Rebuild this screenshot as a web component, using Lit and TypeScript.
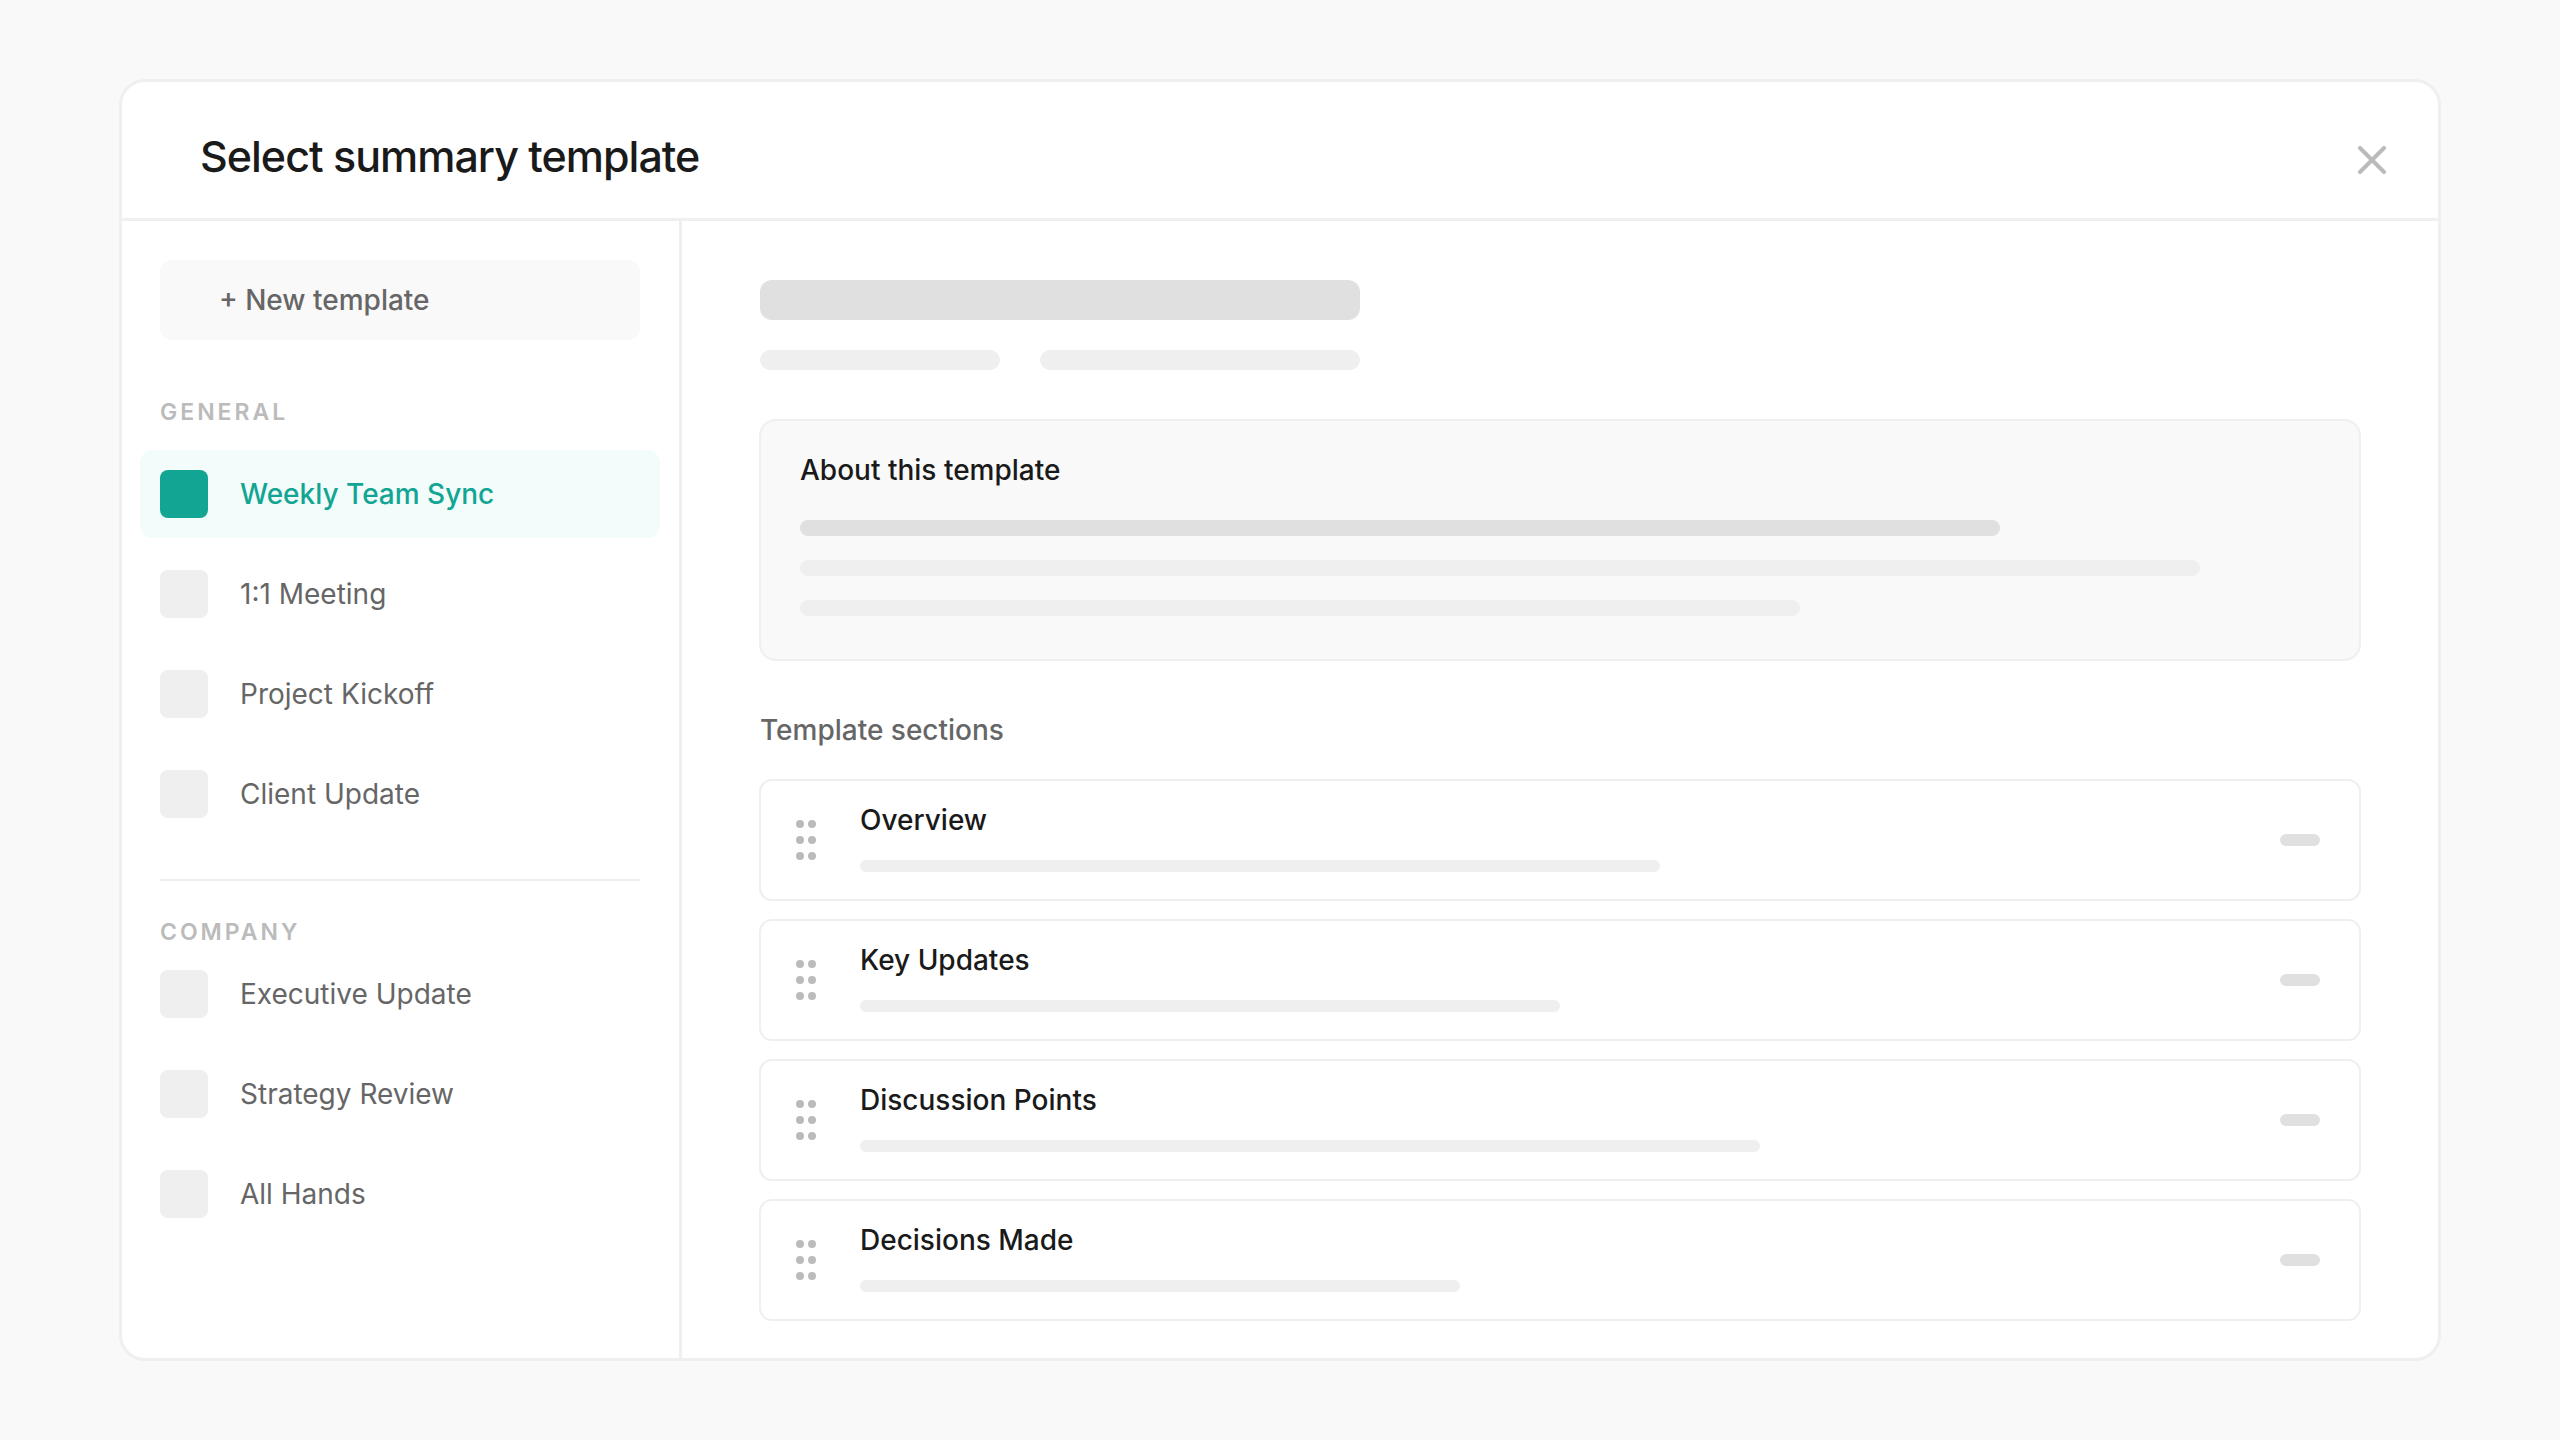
import { LitElement, html, css } from "lit";
import { customElement, property, state } from "lit/decorators.js";
import { classMap } from "lit/directives/class-map.js";
import { styleMap } from "lit/directives/style-map.js";

interface TemplateGroup {
  label: string;
  items: string[];
}

interface TemplateSection {
  title: string;
  width: number;
}

const GROUPS: TemplateGroup[] = [
  {
    label: "GENERAL",
    items: ["Weekly Team Sync", "1:1 Meeting", "Project Kickoff", "Client Update"],
  },
  {
    label: "COMPANY",
    items: ["Executive Update", "Strategy Review", "All Hands"],
  },
];

const SECTIONS: TemplateSection[] = [
  { title: "Overview", width: 800 },
  { title: "Key Updates", width: 700 },
  { title: "Discussion Points", width: 900 },
  { title: "Decisions Made", width: 600 },
];

@customElement("section-card")
class SectionCard extends LitElement {
  @property() heading = "";
  @property({ type: Number }) barWidth = 0;

  static styles = css`
    :host {
      display: flex;
      align-items: center;
      box-sizing: border-box;
      padding: 22px 39px 27px 35px;
      border: 2px solid #efefef;
      border-radius: 13px;
      background: #ffffff;
    }
    .grip {
      flex: none;
      width: 20px;
      height: 40px;
      margin-top: 5px;
      margin-right: 44px;
      fill: #bbbbbb;
    }
    .body {
      flex: 1;
      min-width: 0;
    }
    .title {
      margin: 0 0 23px;
      font-size: 28px;
      line-height: 34px;
      font-weight: 500;
      color: #1a1a1a;
    }
    .bar {
      max-width: 100%;
      height: 12px;
      border-radius: 6px;
      background: #efefef;
    }
    .pill {
      flex: none;
      width: 40px;
      height: 12px;
      margin-top: 5px;
      border-radius: 6px;
      background: #e0e0e0;
    }
  `;

  render() {
    return html`
      <svg class="grip" viewBox="0 0 20 40" aria-hidden="true">
        <circle cx="4" cy="4" r="4" /><circle cx="16" cy="4" r="4" />
        <circle cx="4" cy="20" r="4" /><circle cx="16" cy="20" r="4" />
        <circle cx="4" cy="36" r="4" /><circle cx="16" cy="36" r="4" />
      </svg>
      <div class="body">
        <h3 class="title">${this.heading}</h3>
        <div class="bar" style=${styleMap({ width: `${this.barWidth}px` })}></div>
      </div>
      <div class="pill"></div>
    `;
  }
}

@customElement("app-root")
class AppRoot extends LitElement {
  @state() private selected = "Weekly Team Sync";

  static styles = css`
    :host {
      display: flex;
      box-sizing: border-box;
      min-height: 100vh;
      padding: 79px 119px;
      background: #f9f9f9;
      font-family: Inter, "Liberation Sans", sans-serif;
      color: #1a1a1a;
    }
    .dialog {
      flex: 1;
      display: flex;
      flex-direction: column;
      min-width: 0;
      border: 3px solid #efefef;
      border-radius: 26px;
      background: #ffffff;
      overflow: hidden;
    }
    .header {
      display: flex;
      align-items: flex-end;
      justify-content: space-between;
      padding: 46px 42px 34px 78px;
      border-bottom: 3px solid #efefef;
    }
    .heading {
      margin: 0;
      font-size: 43px;
      line-height: 56px;
      font-weight: 500;
      letter-spacing: -1px;
    }
    button {
      border: 0;
      font: inherit;
      cursor: pointer;
    }
    .close {
      display: flex;
      align-items: center;
      justify-content: center;
      width: 48px;
      height: 48px;
      padding: 0;
      background: none;
    }
    .close svg {
      width: 28px;
      height: 28px;
      stroke: #bbbbbb;
      stroke-width: 4;
      stroke-linecap: round;
    }
    .columns {
      flex: 1;
      display: flex;
    }
    .sidebar {
      flex: none;
      display: flex;
      flex-direction: column;
      box-sizing: border-box;
      width: 560px;
      padding: 39px 19px 39px 18px;
      border-right: 3px solid #efefef;
    }
    .new {
      height: 80px;
      margin: 0 20px 56px;
      padding: 0 59px;
      border-radius: 12px;
      background: #f9f9f9;
      color: #666666;
      font-size: 28px;
      font-weight: 500;
      text-align: left;
    }
    .group-label {
      margin: 0 20px 22px;
      font-size: 23px;
      line-height: 32px;
      font-weight: 600;
      letter-spacing: 3px;
      color: #bbbbbb;
    }
    .group + .group {
      margin-top: 41px;
    }
    .group + .group::before {
      content: "";
      display: block;
      height: 2px;
      margin: 0 20px 35px;
      background: #efefef;
    }
    .group + .group .group-label {
      margin-bottom: 2px;
    }
    .items {
      display: flex;
      flex-direction: column;
      gap: 12px;
      margin: 0;
      padding: 0;
      list-style: none;
    }
    .item {
      display: flex;
      align-items: center;
      gap: 32px;
      width: 100%;
      height: 88px;
      padding: 0 20px;
      border-radius: 13px;
      background: none;
      color: #666666;
      font-size: 28px;
      text-align: left;
    }
    .swatch {
      width: 48px;
      height: 48px;
      border-radius: 8px;
      background: #efefef;
    }
    .item.active {
      background: #f2fcfa;
      color: #12a594;
      font-weight: 500;
    }
    .item.active .swatch {
      background: #12a594;
    }
    .main {
      flex: 1;
      min-width: 0;
      padding: 59px 77px 37px;
    }
    .summary {
      display: flex;
      flex-direction: column;
      gap: 30px;
      padding: 0 1px 49px;
    }
    .title-bar {
      width: 600px;
      max-width: 100%;
      height: 40px;
      border-radius: 12px;
      background: #e0e0e0;
    }
    .meta {
      display: flex;
      gap: 40px;
    }
    .meta-bar {
      height: 20px;
      border-radius: 10px;
      background: #efefef;
    }
    .meta-bar.short {
      width: 240px;
    }
    .meta-bar.long {
      width: 320px;
    }
    .about {
      display: flex;
      flex-direction: column;
      gap: 24px;
      padding: 32px 39px 43px;
      border: 2px solid #efefef;
      border-radius: 17px;
      background: #f9f9f9;
    }
    .about-title {
      margin: 0 0 9px;
      font-size: 28px;
      line-height: 34px;
      font-weight: 500;
    }
    .line {
      max-width: 100%;
      height: 16px;
      border-radius: 8px;
      background: #efefef;
    }
    .line.strong {
      background: #e0e0e0;
    }
    .sections-title {
      margin: 52px 1px 32px;
      font-size: 28px;
      line-height: 34px;
      font-weight: 500;
      color: #666666;
    }
    .sections {
      display: flex;
      flex-direction: column;
      gap: 18px;
    }
  `;

  private renderItem(name: string) {
    const active = name === this.selected;
    return html`
      <li>
        <button
          class=${classMap({ item: true, active })}
          aria-pressed=${active ? "true" : "false"}
          @click=${() => (this.selected = name)}
        >
          <span class="swatch"></span>
          <span>${name}</span>
        </button>
      </li>
    `;
  }

  render() {
    return html`
      <section class="dialog" role="dialog" aria-labelledby="heading">
        <header class="header">
          <h1 class="heading" id="heading">Select summary template</h1>
          <button class="close" aria-label="Close">
            <svg viewBox="0 0 28 28" aria-hidden="true">
              <path d="M2 2 26 26M26 2 2 26" />
            </svg>
          </button>
        </header>
        <div class="columns">
          <nav class="sidebar">
            <button class="new">+ New template</button>
            ${GROUPS.map(
              (group) => html`
                <div class="group">
                  <h2 class="group-label">${group.label}</h2>
                  <ul class="items">
                    ${group.items.map((name) => this.renderItem(name))}
                  </ul>
                </div>
              `,
            )}
          </nav>
          <main class="main">
            <div class="summary">
              <div class="title-bar"></div>
              <div class="meta">
                <div class="meta-bar short"></div>
                <div class="meta-bar long"></div>
              </div>
            </div>
            <div class="about">
              <h2 class="about-title">About this template</h2>
              ${[1200, 1400, 1000].map(
                (width, i) => html`<div
                  class=${classMap({ line: true, strong: i === 0 })}
                  style=${styleMap({ width: `${width}px` })}
                ></div>`,
              )}
            </div>
            <h2 class="sections-title">Template sections</h2>
            <div class="sections">
              ${SECTIONS.map(
                (s) => html`<section-card
                  .heading=${s.title}
                  .barWidth=${s.width}
                ></section-card>`,
              )}
            </div>
          </main>
        </div>
      </section>
    `;
  }
}
